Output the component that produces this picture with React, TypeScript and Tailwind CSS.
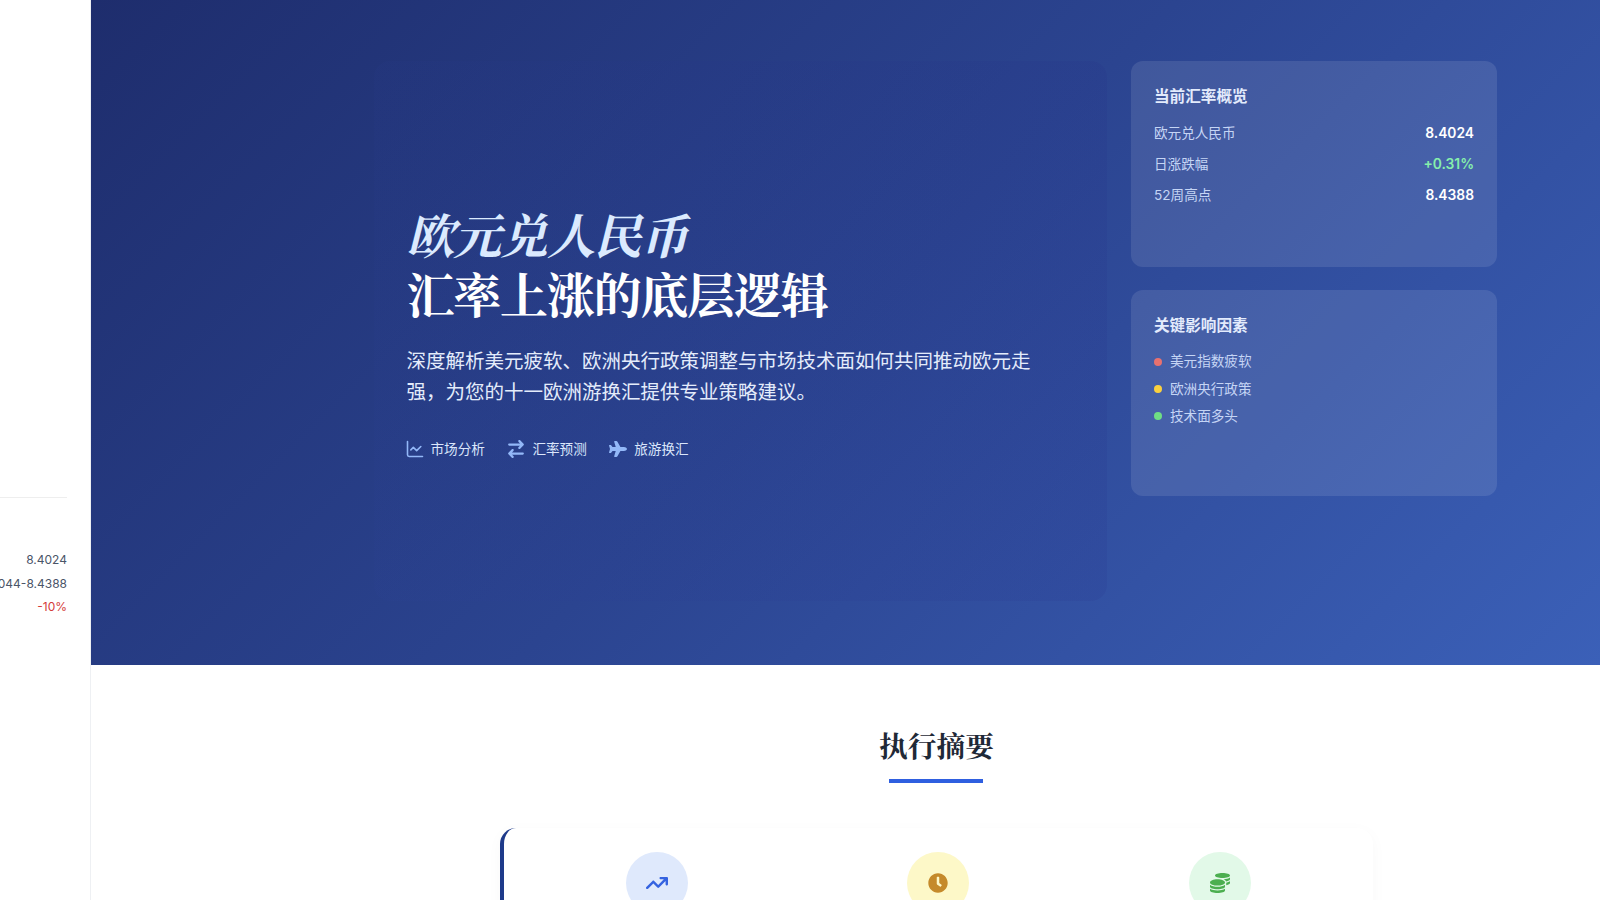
import React from "react";
import { ChartLine } from "lucide-react";
import { FaClock, FaCoins } from "react-icons/fa";
import { FaArrowTrendUp, FaArrowRightArrowLeft, FaPlane } from "react-icons/fa6";

const sans = "font-['Inter','Noto_Sans_CJK_SC',sans-serif]";
const serif = "font-['Noto_Serif_CJK_SC','Liberation_Serif','Noto_Sans_CJK_SC',serif]";

function Row({ label, value, green }: { label: string; value: string; green?: boolean }) {
  return (
    <div className="flex items-center justify-between h-[31.2px]">
      <span className="text-[13.6px] text-[#c5d5f5]">{label}</span>
      <span className={`text-[13.8px] font-semibold ${green ? "text-[#86efac]" : "text-white"}`}>{value}</span>
    </div>
  );
}

function Factor({ color, label }: { color: string; label: string }) {
  return (
    <div className="flex items-center gap-2 h-[27.3px]">
      <span className={`w-2 h-2 rounded-full ${color}`} />
      <span className="text-[13.6px] text-[#c5d5f5]">{label}</span>
    </div>
  );
}

function Tag({ icon, label }: { icon: React.ReactNode; label: string }) {
  return (
    <div className="flex items-center gap-2 h-5">
      <span className="text-[#93b8f8] flex items-center justify-center w-4 h-5">{icon}</span>
      <span className="text-[13.6px] leading-5 text-[#dbe6fb]">{label}</span>
    </div>
  );
}

function Circle({ bg, icon }: { bg: string; icon: React.ReactNode }) {
  return (
    <div className="flex justify-center">
      <div className={`w-[62px] h-[62px] rounded-full ${bg} flex items-center justify-center`}>{icon}</div>
    </div>
  );
}

export default function App() {
  return (
    <div className={`${sans} flex h-[900px] w-[1600px] overflow-hidden bg-white`}>
      <aside className="w-[91px] shrink-0 border-r border-[#eef0f3] flex flex-col items-end pr-[23px] pt-[497px]">
        <div className="w-[200px] border-t border-[#eeeeee]" />
        <div className="mt-[54px] flex flex-col items-end gap-[7.5px] text-[12px] leading-[16px] whitespace-nowrap text-[#4a5568]">
          <span>8.4024</span>
          <span>8.1044-8.4388</span>
          <span className="text-[#d43a3a]">-10%</span>
        </div>
      </aside>
      <main className="flex-1 min-w-0">
        <section className="h-[665px] bg-[linear-gradient(135deg,#1e2d6d_0%,#2b4490_50%,#3b60b8_100%)] px-[103px] pt-[61px]">
          <div className="flex justify-end gap-6">
            <div className="w-[733px] h-[540px] rounded-2xl bg-gradient-to-r from-[#3447ab]/5 to-[#1f1f80]/10 flex flex-col justify-center pl-[32.5px] pr-8 pt-[2px]">
              <h1 className={`${serif} font-bold text-[48px] leading-[58.5px] tracking-[-1.2px] text-white`}>
                <span className="block italic text-[#dbeafe]">欧元兑人民币</span>
                <span className="block">汇率上涨的底层逻辑</span>
              </h1>
              <p className="mt-[23.5px] w-[630px] text-[19.5px] leading-[31.5px] text-[#e4ecfb]">
                深度解析美元疲软、欧洲央行政策调整与市场技术面如何共同推动欧元走强，为您的十一欧洲游换汇提供专业策略建议。
              </p>
              <div className="mt-[30.5px] flex gap-[23.5px]">
                <Tag icon={<ChartLine size={20} strokeWidth={1.9} className="shrink-0" />} label="市场分析" />
                <Tag icon={<FaArrowRightArrowLeft size={18} className="shrink-0" />} label="汇率预测" />
                <Tag icon={<FaPlane size={18} className="shrink-0" />} label="旅游换汇" />
              </div>
            </div>
            <div className="w-[366px] flex flex-col gap-[23px]">
              <div className="h-[206px] rounded-xl bg-white/10 pl-[23px] pr-[23px] pt-[22px]">
                <h3 className="text-[15.6px] leading-[28px] font-semibold text-[#e3ebfc] mb-[6.5px]">当前汇率概览</h3>
                <Row label="欧元兑人民币" value="8.4024" />
                <Row label="日涨跌幅" value="+0.31%" green />
                <Row label="52周高点" value="8.4388" />
              </div>
              <div className="h-[206px] rounded-xl bg-white/10 pl-[23px] pr-[23px] pt-[22px]">
                <h3 className="text-[15.6px] leading-[28px] font-semibold text-[#e3ebfc] mb-2">关键影响因素</h3>
                <Factor color="bg-[#e8716f]" label="美元指数疲软" />
                <Factor color="bg-[#fad03f]" label="欧洲央行政策" />
                <Factor color="bg-[#6fdd84]" label="技术面多头" />
              </div>
            </div>
          </div>
        </section>
        <section className="pt-[62px] pl-[409px] pr-[227px] flex flex-col items-center">
          <h2 className={`${serif} font-bold text-[28.8px] leading-[36px] text-[#1f2937]`}>执行摘要</h2>
          <div className="mt-[16px] mr-[2px] w-[94px] h-1 bg-[#2f5fe0]" />
          <div className="mt-[45px] w-full h-[200px] rounded-2xl border-l-4 border-[#1e3a8a] bg-white shadow-[0_4px_16px_rgba(0,0,0,0.03)] px-3 pt-6 grid grid-cols-3 content-start">
            <Circle bg="bg-[#dfe9fc]" icon={<FaArrowTrendUp size={22} className="text-[#3563e0]" />} />
            <Circle bg="bg-[#fdf8c8]" icon={<FaClock size={20} className="text-[#c58a2b]" />} />
            <Circle bg="bg-[#e2f9e8]" icon={<FaCoins size={20} className="text-[#4caf50]" />} />
          </div>
        </section>
      </main>
    </div>
  );
}
